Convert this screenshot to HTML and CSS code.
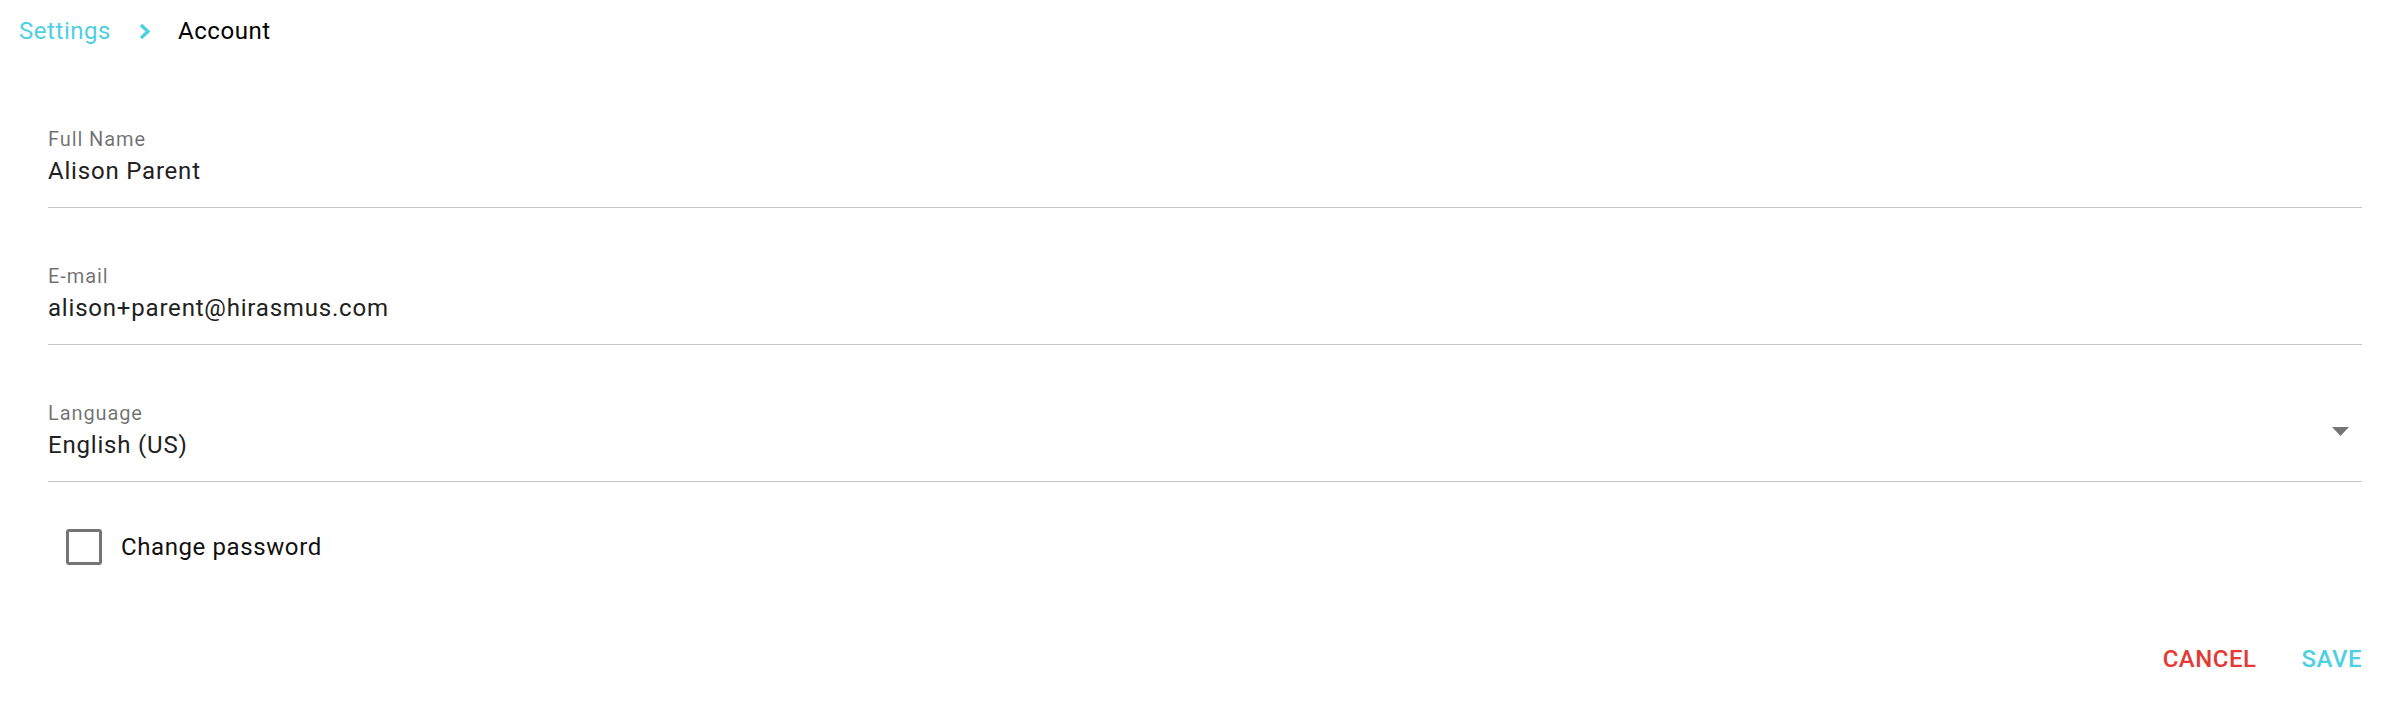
FILE: index.html
```html
<!DOCTYPE html>
<html lang="en">
<head>
  <meta charset="UTF-8">
  <title>Account</title>
  <link rel="stylesheet" href="styles.css">
</head>
<body>
  <nav class="crumbs">
    <a class="crumb-link" href="#">Settings</a>
    <svg class="crumb-sep" width="12" height="17" viewBox="0 0 12 17">
      <polyline points="2,2 9,8.5 2,15" fill="none" stroke="#4dd0e1" stroke-width="3.4"/>
    </svg>
    <span class="crumb-current">Account</span>
  </nav>

  <form class="account-form">
    <div class="field">
      <label class="field-label">Full Name</label>
      <div class="field-value">Alison Parent</div>
    </div>
    <div class="field">
      <label class="field-label">E-mail</label>
      <div class="field-value">alison+parent@hirasmus.com</div>
    </div>
    <div class="field field-select">
      <label class="field-label">Language</label>
      <div class="field-value">English (US)</div>
      <svg class="select-arrow" width="17" height="9" viewBox="0 0 17 9">
        <polygon points="0,0 17,0 8.5,9" fill="#757575"/>
      </svg>
    </div>

    <div class="check-row">
      <span class="check-box"></span>
      <span class="check-label">Change password</span>
    </div>

    <div class="actions">
      <button type="button" class="btn btn-cancel">Cancel</button>
      <button type="button" class="btn btn-save">Save</button>
    </div>
  </form>
</body>
</html>
```

FILE: styles.css
```css
html, body {
  margin: 0;
  padding: 0;
  background: #fff;
  font-family: Roboto, "Liberation Sans", Arial, sans-serif;
  color: rgba(0, 0, 0, 0.87);
}
.crumbs {
  display: flex;
  align-items: center;
  padding: 17px 0 0 19px;
  font-size: 24px;
  line-height: 28px;
  letter-spacing: 0.55px;
}
.crumb-link {
  color: #4dd0e1;
  text-decoration: none;
}
.crumb-sep { margin: 0 27px 0 28px; }
.crumb-current { color: #000; }

.account-form {
  padding: 26px 46px 0 48px;
}
.field {
  position: relative;
  padding: 55px 0 20px;
  border-bottom: 1px solid #c4c4c4;
}
.field-label {
  display: block;
  font-size: 20px;
  line-height: 26px;
  letter-spacing: 0.9px;
  color: rgba(0, 0, 0, 0.56);
}
.field-value {
  margin-top: 3px;
  font-size: 24px;
  line-height: 32px;
  letter-spacing: 0.8px;
  color: #212121;
}
.select-arrow {
  position: absolute;
  top: 82px;
  right: 13px;
}
.check-row {
  display: flex;
  align-items: center;
  margin-top: 47px;
  padding-left: 18px;
}
.check-box {
  width: 36px;
  height: 36px;
  box-sizing: border-box;
  border: 3px solid #757575;
  border-radius: 3px;
}
.check-label {
  margin-left: 19px;
  font-size: 24px;
  line-height: 28px;
  letter-spacing: 0.6px;
  color: #111;
}
.actions {
  display: flex;
  justify-content: flex-end;
  gap: 45px;
  margin-top: 80px;
}
.btn {
  padding: 0;
  border: none;
  background: none;
  font-family: inherit;
  font-size: 24px;
  font-weight: 500;
  line-height: 28px;
  text-transform: uppercase;
  letter-spacing: 0.5px;
  cursor: pointer;
}
.btn-cancel { color: #e53935; }
.btn-save { color: #4dd0e1; }
```
